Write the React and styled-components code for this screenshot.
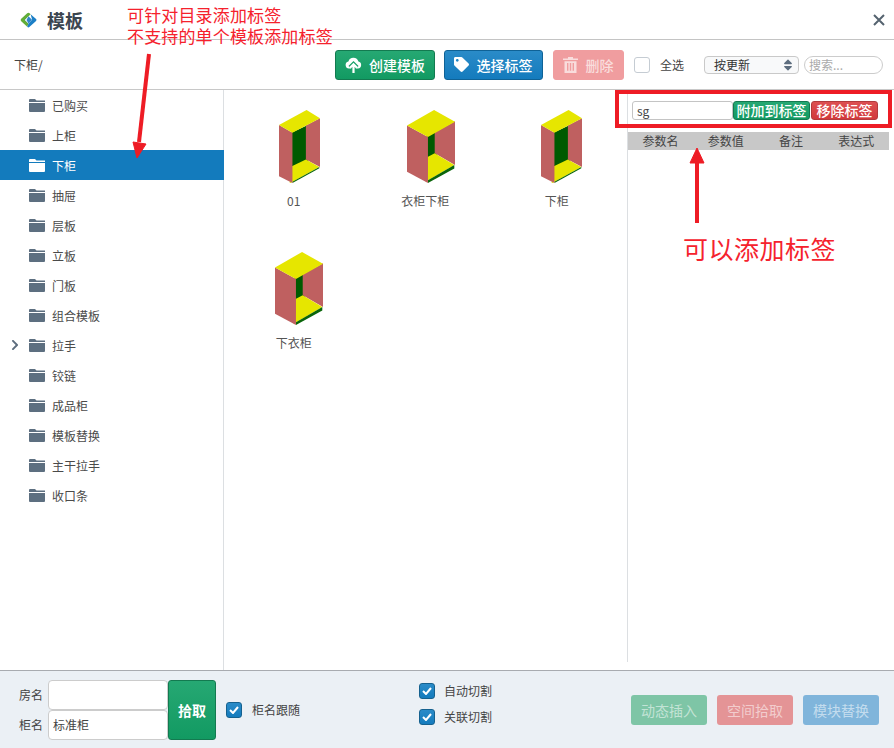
import React from 'react';
import styled, { createGlobalStyle } from 'styled-components';
import { FaTag, FaSort, FaChevronRight } from 'react-icons/fa';

const Global = createGlobalStyle`
  html, body { margin: 0; padding: 0; background: #fff; }
  body { font-family: "Noto Sans CJK SC", "Open Sans", sans-serif; font-size: 12px; color: #444; overflow: hidden; }
  * { box-sizing: border-box; }
`;

const Page = styled.div`
  position: relative;
  width: 894px;
  height: 748px;
  display: flex;
  flex-direction: column;
  overflow: hidden;
`;

/* header */
const Header = styled.div`
  height: 40px;
  flex: none;
  display: flex;
  align-items: center;
  padding: 0 9px 0 20px;
  border-bottom: 1px solid #c4c4c4;
`;
const Title = styled.div`
  margin-left: 10px;
  font-size: 18px;
  font-weight: 700;
  color: #3c4650;
  flex: 1;
`;
const CloseBtn = styled.svg`
  width: 12px;
  height: 12px;
  stroke: #55636f;
  stroke-width: 2;
`;

/* toolbar */
const Toolbar = styled.div`
  height: 50px;
  flex: none;
  display: flex;
  align-items: center;
  padding: 0 11px 0 14px;
  border-bottom: 1px solid #c8c8c8;
`;
const Crumb = styled.div`
  font-size: 12px;
  color: #444;
  margin-right: auto;
`;
const variants = {
  green: 'linear-gradient(#26a873, #129a62)',
  blue: 'linear-gradient(#2a8bc8, #147bbd)',
};
const edges = { green: '#137a50', blue: '#0f6296' };
const ToolButton = styled.button`
  height: 30px;
  width: ${(p) => p.$w}px;
  margin-right: ${(p) => p.$gap}px;
  display: flex;
  align-items: center;
  justify-content: center;
  gap: 7px;
  padding: 0;
  font: 500 14px "Noto Sans CJK SC", sans-serif;
  color: #fff;
  border-radius: 3px;
  border: 1px solid ${(p) => (p.$tone ? edges[p.$tone] : '#f09d9f')};
  background: ${(p) => (p.$tone ? variants[p.$tone] : '#f09d9f')};
  ${(p) => !p.$tone && 'color: #f9dddd;'}
`;
const CheckBox = styled.span`
  width: 16px;
  height: 16px;
  flex: none;
  border-radius: 3px;
  display: inline-flex;
  align-items: center;
  justify-content: center;
  border: 1px solid ${(p) => (p.$on ? '#15618f' : '#c5ccd3')};
  background: ${(p) => (p.$on ? 'linear-gradient(#2a8bc8, #147bbd)' : '#fff')};
`;
const CheckLabel = styled.label`
  display: flex;
  align-items: center;
  gap: ${(p) => p.$gap || 10}px;
  font-size: 12px;
  color: #444;
`;
const SortBox = styled.div`
  width: 95px;
  height: 18px;
  margin-left: 20px;
  padding: 0 3px 0 9px;
  border: 1px solid #c9c9c9;
  border-radius: 4px;
  display: flex;
  align-items: center;
  justify-content: space-between;
  font-size: 12px;
  color: #333;
  background: #f8f9fa;
  svg { color: #5d6d7e; font-size: 14px; }
`;
const Search = styled.input`
  width: 79px;
  height: 18px;
  margin-left: 5px;
  padding: 0 4px;
  border: 1px solid #ccc;
  border-radius: 9px;
  font: 12px "Noto Sans CJK SC", sans-serif;
  outline: none;
  &::placeholder { color: #aaa; }
`;

/* body */
const Body = styled.div`
  flex: 1;
  min-height: 0;
  display: flex;
`;
const Sidebar = styled.div`
  width: 224px;
  flex: none;
  border-right: 1px solid #dcdfe2;
`;
const Row = styled.div`
  position: relative;
  height: 30px;
  display: flex;
  align-items: center;
  gap: 7px;
  padding-left: 29px;
  font-size: 12px;
  color: ${(p) => (p.$active ? '#fff' : '#4a4a4a')};
  background: ${(p) => (p.$active ? '#137bbd' : 'transparent')};
  margin-right: ${(p) => (p.$active ? '-1px' : '0')};
`;
const Chevron = styled.span`
  position: absolute;
  left: 9px;
  top: 9px;
  color: #5d6d7e;
  font-size: 12px;
  line-height: 1;
`;
const FolderSvg = styled.svg`
  width: 16px;
  height: 13px;
  fill: ${(p) => (p.$active ? '#fff' : '#5d6f80')};
`;
const Grid = styled.div`
  flex: 1;
  min-width: 0;
  padding: 20px 0 0 4px;
  display: grid;
  grid-template-columns: repeat(3, 131.5px);
  grid-auto-rows: 141.5px;
  align-content: start;
`;
const Item = styled.div`
  display: flex;
  flex-direction: column;
  align-items: center;
  font-size: 12px;
  color: #555;
`;
const ItemThumb = styled.svg`
  height: 73px;
  width: ${(p) => p.$w}px;
  margin-left: ${(p) => p.$shift}px;
`;
const ItemName = styled.div`
  margin-top: 9px;
  line-height: 17px;
`;
const Panel = styled.div`
  width: 267px;
  flex: none;
  margin-bottom: 8px;
  border-left: 1px solid #dcdfe2;
  padding: 11px 5px 0 0;
`;
const TagBar = styled.div`
  display: flex;
  align-items: center;
  height: 19px;
  margin-left: 4px;
`;
const TagInput = styled.input`
  width: 101px;
  height: 19px;
  padding: 0 4px;
  border: 1px solid #c4c4c4;
  border-radius: 3px;
  font: 12px "Noto Sans CJK SC", sans-serif;
  color: #444;
  outline: none;
`;
const TagButton = styled.button`
  height: 19px;
  width: ${(p) => p.$w}px;
  margin-left: ${(p) => (p.$red ? 1 : 0)}px;
  padding: 0;
  border-radius: 3px;
  border: 1px solid ${(p) => (p.$red ? '#b23a3c' : '#137a50')};
  background: ${(p) => (p.$red ? 'linear-gradient(#dd5052, #d2393c)' : 'linear-gradient(#26a873, #129a62)')};
  color: #fff;
  font: 500 14px/17px "Noto Sans CJK SC", sans-serif;
  white-space: nowrap;
  overflow: hidden;
`;
const TableHead = styled.div`
  margin-top: 12px;
  height: 18px;
  display: grid;
  grid-template-columns: repeat(4, 1fr);
  background: #c8c8c8;
  font-size: 12px;
  color: #444;
  text-align: center;
  line-height: 18px;
`;

/* footer */
const Footer = styled.div`
  height: 78px;
  flex: none;
  background: #ebf0f5;
  border-top: 1px solid #a8abb0;
  display: flex;
  align-items: center;
  padding: 0 15px 0 19px;
`;
const Names = styled.div`
  display: grid;
  grid-template-columns: 24px 120px;
  grid-auto-rows: 30px;
  column-gap: 5px;
  align-items: center;
  font-size: 12px;
  color: #444;
`;
const NameInput = styled.input`
  width: 120px;
  height: 30px;
  padding: 0 4px;
  border: 1px solid #ccc;
  border-radius: 4px;
  font: 12px "Noto Sans CJK SC", sans-serif;
  color: #444;
  background: #fff;
  outline: none;
`;
const PickButton = styled.button`
  width: 48px;
  height: 60px;
  padding: 0;
  border: 1px solid #137a50;
  border-radius: 3px;
  background: linear-gradient(#26a873, #129a62);
  color: #fff;
  font: 700 14px "Noto Sans CJK SC", sans-serif;
`;
const Follow = styled.div`
  margin-left: 10px;
`;
const CutGroup = styled.div`
  margin-left: 119px;
  margin-bottom: 12px;
  display: flex;
  flex-direction: column;
  gap: 9px;
`;
const Actions = styled.div`
  margin-left: auto;
  display: flex;
  gap: 10px;
`;
const ActionButton = styled.button`
  width: 76px;
  height: 30px;
  padding: 0;
  border: none;
  border-radius: 3px;
  background: ${(p) => p.$bg};
  color: rgba(255, 255, 255, 0.55);
  font: 14px "Noto Sans CJK SC", sans-serif;
`;

/* annotations drawn over the screenshot */
const Note = styled.div`
  position: absolute;
  left: ${(p) => p.$x}px;
  top: ${(p) => p.$y}px;
  color: #f5222d;
  font-size: ${(p) => p.$size}px;
  line-height: ${(p) => p.$lh}px;
  letter-spacing: ${(p) => p.$track}px;
  white-space: nowrap;
`;
const Frame = styled.div`
  position: absolute;
  left: 615px;
  top: 90px;
  width: 277px;
  height: 38px;
  border: 4px solid #ee1c25;
  pointer-events: none;
`;
const Overlay = styled.svg`
  position: absolute;
  left: 0;
  top: 0;
  width: 894px;
  height: 748px;
  pointer-events: none;
`;

const Check = () => (
  <svg width="10" height="8" viewBox="0 0 10 8" fill="none" stroke="#fff" strokeWidth="2">
    <path d="M1 4l3 3 5-6" />
  </svg>
);

const Folder = ({ active }) => (
  <FolderSvg $active={active} viewBox="0 0 16 13">
    <path d="M0 1a1 1 0 0 1 1-1h5l1.5 1.5H16V3H0z" />
    <path d="M0 4h16v8a1 1 0 0 1-1 1H1a1 1 0 0 1-1-1z" />
  </FolderSvg>
);

const CloudIcon = () => (
  <svg width="17" height="16" viewBox="0 0 17 16" fill="none">
    <path d="M4 11.5a3.6 3.6 0 0 1-.6-7.1A5.2 5.2 0 0 1 13.4 4.6a3.5 3.5 0 0 1-.4 6.9z" fill="#fff" />
    <path d="M8.5 16V7.5M5 10.5l3.5-3.5 3.5 3.5" stroke="#1ba26a" strokeWidth="4.4" />
    <path d="M8.5 16V7.5M5 10.8l3.5-3.5 3.5 3.5" stroke="#fff" strokeWidth="2.2" />
  </svg>
);

const TrashIcon = () => (
  <svg width="15" height="16" viewBox="0 0 15 16" fill="#f9dddd">
    <path d="M5 0h5v1.5h5V3H0V1.5h5z" />
    <path d="M1.5 4.2h12V16h-12zM4 6v7.8h1.4V6zM6.8 6v7.8h1.4V6zM9.6 6v7.8H11V6z" fillRule="evenodd" />
  </svg>
);

const Logo = () => (
  <svg width="17" height="16" viewBox="0 0 17 16">
    <path d="M7.2 1.2a1.8 1.8 0 0 1 2.4 0l1 1L4.9 8l3.6 3.6-1.3 3.2-6-5.6a1.7 1.7 0 0 1 0-2.4z" fill="#62ad38" />
    <path d="M10.6 2.2l5.2 4.6a1.6 1.6 0 0 1 0 2.4l-6.2 5.6a1.6 1.6 0 0 1-2.4 0l1.3-3.2L12.2 8z" fill="#1c7fc6" />
    <path d="M8.5 4.2L12.2 8l-3.7 3.6L4.9 8z" fill="#2f86c8" />
    <path d="M8.5 4.2L4.9 8l3.6 3.6-2-3.6z" fill="#fff" />
  </svg>
);

// back and floor run a little under the side faces so no white seam shows
const narrow = {
  box: '88 30 122 218',
  w: 41,
  left: '88,75 128,98 128,248 88,228',
  top: '88,75 170,30 210,55 128,98',
  right: '168,76 210,55 210,200 168,178',
  back: '120,100 174,75 174,185 120,205',
  floor: '120,201 168,178 208,200 120,249',
  edge: '128,248 208,204 208,200 128,244',
};
const wide = {
  box: '50 32 142 216',
  w: 48,
  left: '50,78 112,112 112,248 50,215',
  top: '50,78 130,32 192,67 112,112',
  right: '132,98 192,65 192,195 132,160',
  back: '105,112 138,95 138,165 105,175',
  floor: '105,174 132,160 190,195 105,244',
  edge: '112,248 190,205 190,195 112,240',
};

const Cabinet = ({ shape, shift }) => (
  <ItemThumb $w={shape.w} $shift={shift} viewBox={shape.box} preserveAspectRatio="none">
    <polygon points={shape.back} fill="#005a00" />
    <polygon points={shape.right} fill="#bf6060" />
    <polygon points={shape.floor} fill="#e6e600" />
    <polygon points={shape.edge} fill="#0a650a" />
    <polygon points={shape.left} fill="#bf6060" />
    <polygon points={shape.top} fill="#e6e600" />
  </ItemThumb>
);

const folders = ['已购买', '上柜', '下柜', '抽屉', '层板', '立板', '门板', '组合模板', '拉手', '铰链', '成品柜', '模板替换', '主干拉手', '收口条'];
const cabinets = [
  { name: '01', shape: narrow, shift: 11 },
  { name: '衣柜下柜', shape: wide, shift: 12 },
  { name: '下柜', shape: narrow, shift: 10 },
  { name: '下衣柜', shape: wide, shift: 11 },
];

export default function App() {
  return (
    <Page>
      <Global />
      <Header>
        <Logo />
        <Title>模板</Title>
        <CloseBtn viewBox="0 0 12 12"><path d="M1 1l10 10M11 1L1 11" /></CloseBtn>
      </Header>
      <Toolbar>
        <Crumb>下柜/</Crumb>
        <ToolButton $tone="green" $w={100} $gap={9}><CloudIcon />创建模板</ToolButton>
        <ToolButton $tone="blue" $w={99} $gap={10}><FaTag size={15} />选择标签</ToolButton>
        <ToolButton $w={71} $gap={10}><TrashIcon />删除</ToolButton>
        <CheckLabel><CheckBox />全选</CheckLabel>
        <SortBox>按更新<FaSort /></SortBox>
        <Search placeholder="搜索..." />
      </Toolbar>
      <Body>
        <Sidebar>
          {folders.map((f) => (
            <Row key={f} $active={f === '下柜'}>
              {f === '拉手' && <Chevron><FaChevronRight /></Chevron>}
              <Folder active={f === '下柜'} />
              {f}
            </Row>
          ))}
        </Sidebar>
        <Grid>
          {cabinets.map((c) => (
            <Item key={c.name}>
              <Cabinet shape={c.shape} shift={c.shift} />
              <ItemName>{c.name}</ItemName>
            </Item>
          ))}
        </Grid>
        <Panel>
          <TagBar>
            <TagInput defaultValue="sg" />
            <TagButton $w={77}>附加到标签</TagButton>
            <TagButton $red $w={67}>移除标签</TagButton>
          </TagBar>
          <TableHead>
            <span>参数名</span><span>参数值</span><span>备注</span><span>表达式</span>
          </TableHead>
        </Panel>
      </Body>
      <Footer>
        <Names>
          <span>房名</span><NameInput />
          <span>柜名</span><NameInput defaultValue="标准柜" />
        </Names>
        <PickButton>拾取</PickButton>
        <Follow><CheckLabel><CheckBox $on><Check /></CheckBox>柜名跟随</CheckLabel></Follow>
        <CutGroup>
          <CheckLabel $gap={9}><CheckBox $on><Check /></CheckBox>自动切割</CheckLabel>
          <CheckLabel $gap={9}><CheckBox $on><Check /></CheckBox>关联切割</CheckLabel>
        </CutGroup>
        <Actions>
          <ActionButton $bg="#7ec5a6">动态插入</ActionButton>
          <ActionButton $bg="#e49496">空间拾取</ActionButton>
          <ActionButton $bg="#80b5db">模块替换</ActionButton>
        </Actions>
      </Footer>

      <Note $x={127} $y={4} $size={17} $lh={21} $track={0.15}>可针对目录添加标签<br />不支持的单个模板添加标签</Note>
      <Note $x={683} $y={232} $size={25} $lh={32} $track={0.5}>可以添加标签</Note>
      <Frame />
      <Overlay viewBox="0 0 894 748">
        <path d="M149 54L139 142" stroke="#ee1c25" strokeWidth="4" fill="none" />
        <path d="M133 142L146 144L137 158z" fill="#ee1c25" stroke="#ee1c25" strokeWidth="1" />
        <path d="M697 223V162" stroke="#ee1c25" strokeWidth="4" fill="none" />
        <path d="M690 163h14l-7 -15z" fill="#ee1c25" stroke="#ee1c25" strokeWidth="1" />
      </Overlay>
    </Page>
  );
}
